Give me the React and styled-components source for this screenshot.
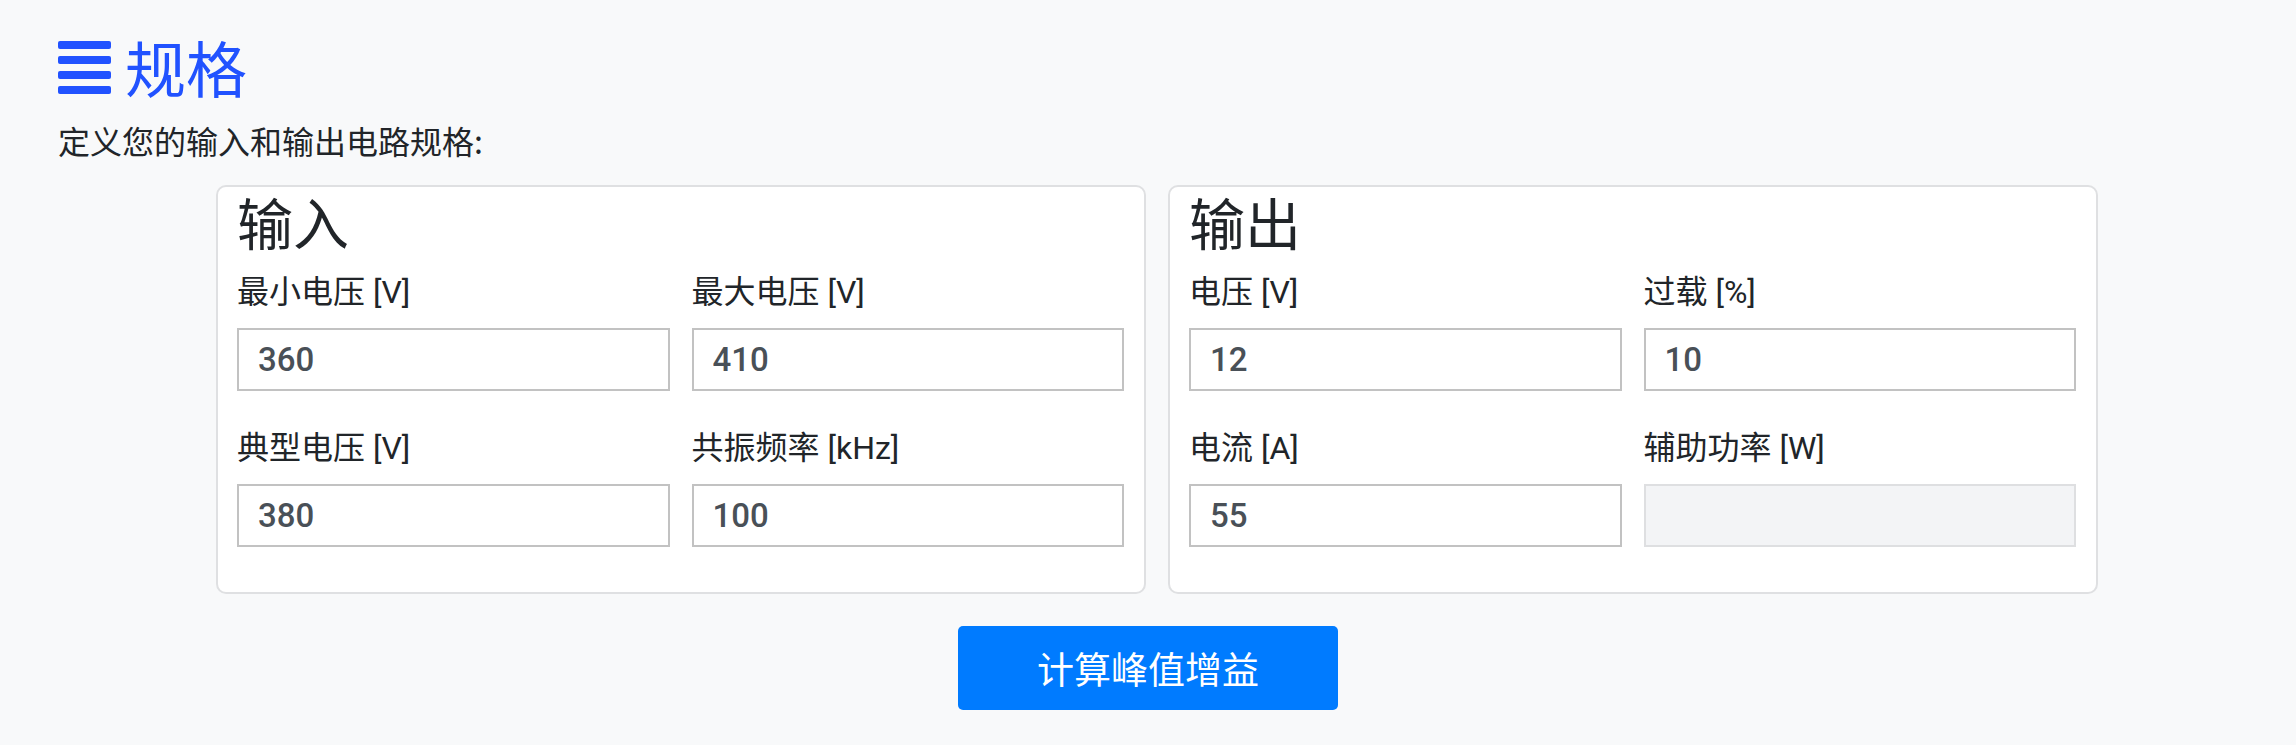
import React from "react";
import styled, { createGlobalStyle } from "styled-components";

const GlobalStyle = createGlobalStyle`
  html, body { margin: 0; padding: 0; background: #f8f9fa; }
  body {
    font-family: Roboto, "Noto Sans CJK SC", sans-serif;
    color: #212529;
  }
  * { box-sizing: border-box; }
`;

const Page = styled.div`
  padding: 32px 58px 0 58px;
`;

const Header = styled.div`
  display: flex;
  align-items: center;
  gap: 14px;
  height: 70px;
`;

const Title = styled.h2`
  margin: 0;
  font-family: "Noto Sans CJK SC", sans-serif;
  font-weight: 400;
  font-size: 61px;
  line-height: 64px;
  color: #2152ff;
`;

const Subtitle = styled.p`
  margin: 14px 0 0 0;
  font-family: "Noto Sans CJK SC", sans-serif;
  font-size: 32px;
  line-height: 48px;
  color: #212529;
`;

const Cards = styled.div`
  display: grid;
  grid-template-columns: 1fr 1fr;
  gap: 22px;
  width: 1882px;
  margin: 21px 0 0 158px;
`;

const Card = styled.section`
  background: #fff;
  border: 2px solid #dfe0e2;
  border-radius: 10px;
  padding: 2px 20px 45px 19px;
`;

const CardTitle = styled.h3`
  margin: 0;
  font-family: "Noto Sans CJK SC", sans-serif;
  font-weight: 400;
  font-size: 56px;
  line-height: 64px;
  color: #212529;
`;

const Fields = styled.div`
  display: grid;
  grid-template-columns: 1fr 1fr;
  column-gap: 22px;
  row-gap: 33px;
  margin-top: 15px;
`;

const Field = styled.div`
  display: flex;
  flex-direction: column;
  gap: 12px;
`;

const Label = styled.label`
  font-size: 32px;
  line-height: 48px;
  height: 48px;
  color: #212529;
  white-space: nowrap;
`;

const Input = styled.input`
  display: block;
  width: 100%;
  height: 63px;
  padding: 0 18px 0 19px;
  border: 2px solid ${(p) => (p.disabled ? "#dedfe1" : "#c2c2c2")};
  border-radius: 0;
  background: ${(p) => (p.disabled ? "#f3f4f6" : "#fff")};
  font-family: Roboto, sans-serif;
  font-weight: 500;
  font-size: 33px;
  color: #495057;
  outline: none;
`;

const ButtonRow = styled.div`
  display: flex;
  justify-content: center;
  margin-top: 32px;
  width: 2180px;
`;

const Button = styled.button`
  width: 380px;
  height: 84px;
  border: none;
  border-radius: 5px;
  background: #007bff;
  color: #fff;
  font-family: "Noto Sans CJK SC", sans-serif;
  font-size: 37px;
  cursor: pointer;
`;

const BarsIcon = () => (
  <svg width="53" height="53" viewBox="0 0 53 53" aria-hidden="true">
    {[0, 15, 30, 45].map((y) => (
      <rect key={y} x="0" y={y} width="53" height="8" rx="2" fill="#2152ff" />
    ))}
  </svg>
);

const inputFields = [
  { label: "最小电压 [V]", value: "360" },
  { label: "最大电压 [V]", value: "410" },
  { label: "典型电压 [V]", value: "380" },
  { label: "共振频率 [kHz]", value: "100" },
];

const outputFields = [
  { label: "电压 [V]", value: "12" },
  { label: "过载 [%]", value: "10" },
  { label: "电流 [A]", value: "55" },
  { label: "辅助功率 [W]", value: "", disabled: true },
];

const FieldGroup = ({ title, fields }) => (
  <Card>
    <CardTitle>{title}</CardTitle>
    <Fields>
      {fields.map((f) => (
        <Field key={f.label}>
          <Label>{f.label}</Label>
          <Input defaultValue={f.value} disabled={f.disabled} readOnly={!f.disabled} />
        </Field>
      ))}
    </Fields>
  </Card>
);

export default function App() {
  return (
    <>
      <GlobalStyle />
      <Page>
        <Header>
          <BarsIcon />
          <Title>规格</Title>
        </Header>
        <Subtitle>定义您的输入和输出电路规格:</Subtitle>
        <Cards>
          <FieldGroup title="输入" fields={inputFields} />
          <FieldGroup title="输出" fields={outputFields} />
        </Cards>
        <ButtonRow>
          <Button>计算峰值增益</Button>
        </ButtonRow>
      </Page>
    </>
  );
}
